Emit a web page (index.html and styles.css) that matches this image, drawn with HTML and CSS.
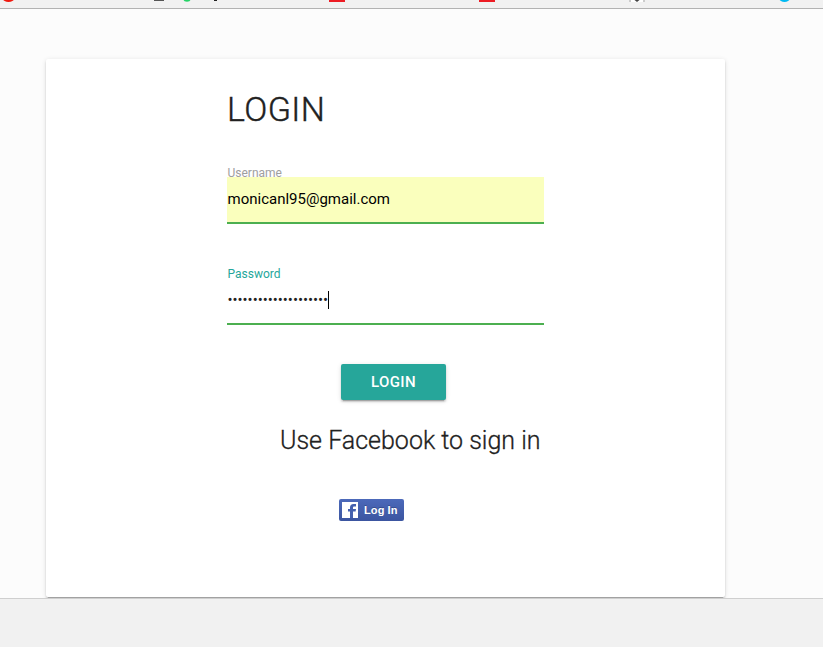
FILE: index.html
```html
<!DOCTYPE html>
<html lang="en">
<head>
<meta charset="utf-8">
<title>Login</title>
<link rel="stylesheet" href="styles.css">
</head>
<body>
<div class="bookmarks">
  <svg width="823" height="8" viewBox="0 0 823 8" aria-hidden="true">
    <ellipse cx="8.5" cy="-1" rx="5.5" ry="3" fill="#f0190f"/>
    <rect x="154" y="0" width="10" height="1" fill="#555"/>
    <ellipse cx="187" cy="-.5" rx="3.5" ry="2.3" fill="#25d366"/>
    <rect x="214" y="0" width="3" height="1" fill="#222"/>
    <path fill="#ed1c24" d="M329 0h16v2h-16zM479 0h16v2h-16z"/>
    <path fill="#fff" d="M630 0h14v2h-14z"/>
    <path fill="#ccc" d="M629 0h2v2h-2zM643 0h2v2h-2z"/>
    <path fill="#444" d="M634.500 0h5l-2.500 2z"/>
    <ellipse cx="784.500" cy="-1" rx="5" ry="3" fill="#00b9f2"/>
  </svg>
</div>
<main class="page">
  <section class="card">
    <form class="login">
      <h1 class="title">LOGIN</h1>
      <div class="field">
        <label class="label">Username</label>
        <div class="input filled">monicanl95@gmail.com</div>
      </div>
      <div class="field">
        <label class="label active">Password</label>
        <div class="input"><span class="dots">••••••••••••••••••••</span><span class="caret"></span></div>
      </div>
      <button class="submit" type="button">LOGIN</button>
      <h2 class="subtitle">Use Facebook to sign in</h2>
      <a class="facebook">
        <svg width="16" height="16" viewBox="0 0 16 16" aria-hidden="true">
          <path fill="#fff" d="M0 0h16v16H0z"/>
          <path fill="#4460ae" d="M8 16V9.500H6V7h2V5.500C8 3.200 9.300 2 11.500 2H14v2.500h-1.500c-1.200 0-1.500.500-1.500 1.400V7h3l-.4 2.500H11V16z"/>
        </svg>
        <span>Log In</span>
      </a>
    </form>
  </section>
</main>
<footer class="footer"></footer>
</body>
</html>
```
FILE: styles.css
```css
* { box-sizing: border-box; }
body {
  margin: 0;
  height: 647px;
  overflow: hidden;
  display: flex;
  flex-direction: column;
  background: #fcfcfc;
  font-family: Roboto, sans-serif;
  color: #212121;
}
.bookmarks { height: 9px; background: #f1f1f1; border-bottom: 1px solid #b2b2b2; }
.bookmarks svg { display: block; }
.page { height: 589px; padding: 50px 98px 0 46px; overflow: hidden; }
.card {
  height: 538px;
  padding: 30px 181px 0;
  background: #fff;
  border-radius: 2px;
  box-shadow: 0 2px 2px 0 rgba(0, 0, 0, .14), 0 1px 5px 0 rgba(0, 0, 0, .12), 0 3px 1px -2px rgba(0, 0, 0, .2);
}
.login { display: flex; flex-direction: column; }
.title {
  margin: 0 0 38px;
  height: 40px;
  font-size: 34px;
  line-height: 40px;
  font-weight: 300;
  letter-spacing: .4px;
  -webkit-text-stroke: .4px #212121;
}
.field { height: 101px; display: flex; flex-direction: column; }
.label { height: 10px; font-size: 12px; line-height: 12px; color: #9e9e9e; padding-left: .5px; }
.label.active { color: #26a69a; }
.input {
  height: 47px;
  display: flex;
  align-items: center;
  padding-left: .5px;
  padding-bottom: 1px;
  border-bottom: 2px solid #4caf50;
  font-size: 15px;
}
.filled { background: #faffbd; color: #000; }
.dots { letter-spacing: -.03px; }
.caret { width: 1px; height: 18px; background: #000; }
.submit {
  width: 105px;
  height: 36px;
  margin: -5px 0 0 114px;
  padding: 0;
  border: 0;
  border-radius: 2px;
  background: #26a69a;
  color: #fff;
  font: 500 15px/36px Roboto, sans-serif;
  letter-spacing: .4px;
  box-shadow: 0 2px 2px 0 rgba(0, 0, 0, .14), 0 1px 5px 0 rgba(0, 0, 0, .12), 0 3px 1px -2px rgba(0, 0, 0, .2);
}
.subtitle {
  margin: 26px 0 0 53px;
  font-size: 25px;
  line-height: 30px;
  font-weight: 300;
  white-space: nowrap;
  -webkit-text-stroke: .3px #212121;
}
.facebook {
  width: 65px;
  height: 22px;
  margin: 43px 0 0 112px;
  padding-left: 3px;
  display: flex;
  align-items: center;
  gap: 6px;
  border-radius: 2px;
  background: linear-gradient(#4c69ba, #3b55a0);
  color: #fff;
  font: bold 11px/22px "Liberation Sans", sans-serif;
  letter-spacing: .1px;
  text-shadow: 0 -1px 0 #354c8c;
  white-space: nowrap;
}
.footer { height: 49px; background: #f1f1f1; border-top: 1px solid #cfcfcf; }
```
